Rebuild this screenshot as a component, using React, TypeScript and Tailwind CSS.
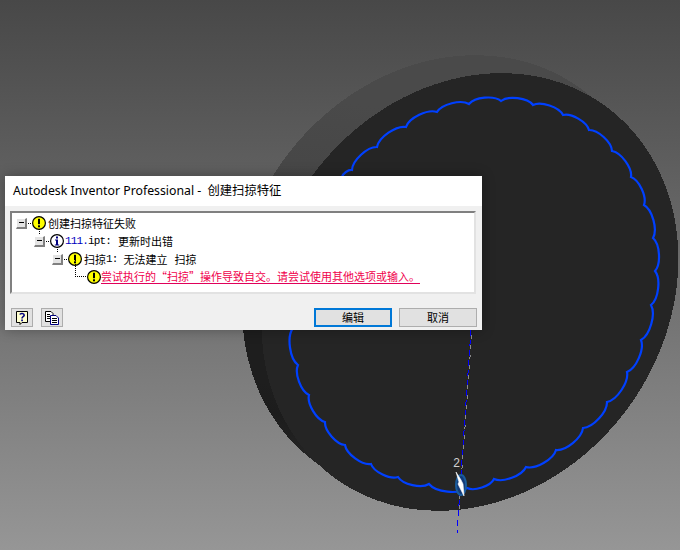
import type { ReactNode } from 'react'

type Pt = [number, number]

const cusps: Pt[] = [
  [342, 177], [352, 170], [377, 147], [406, 127], [437, 112], [469, 104], [501, 101], [533, 105],
  [563, 115], [589, 130], [612, 151], [631, 177], [644, 205], [653, 238], [655, 271], [651, 305],
  [641, 340], [627, 372], [607, 402], [583, 428], [556, 450], [526, 467], [494, 479], [467, 488],
  [429, 484], [398, 477], [371, 464], [345, 445], [325, 422], [309, 395], [298, 365], [293, 328],
]

function scallop(pts: Pt[]) {
  let d = `M${pts[0][0]} ${pts[0][1]}`
  for (let i = 1; i < pts.length; i++) {
    const [ax, ay] = pts[i - 1]
    const [bx, by] = pts[i]
    const dx = bx - ax
    const dy = by - ay
    const len = Math.hypot(dx, dy)
    const nx = dy / len
    const ny = -dx / len
    const h = len * 0.2
    d += ` C${ax + dx * 0.2 + nx * h} ${ay + dy * 0.2 + ny * h} ${bx - dx * 0.2 + nx * h} ${by - dy * 0.2 + ny * h} ${bx} ${by}`
  }
  return d
}

function Model() {
  return (
    <svg className="absolute inset-0" width={680} height={550} viewBox="0 0 680 550">
      <defs>
        <linearGradient id="rimTop" gradientUnits="userSpaceOnUse" x1="280" y1="180" x2="500" y2="50">
          <stop offset="0" stopColor="#3e3e3e" />
          <stop offset="1" stopColor="#4a4a4a" />
        </linearGradient>
        <linearGradient id="rimLow" gradientUnits="userSpaceOnUse" x1="240" y1="340" x2="300" y2="320">
          <stop offset="0" stopColor="#262626" />
          <stop offset="0.6" stopColor="#1c1c1c" />
          <stop offset="1" stopColor="#1e1e1e" />
        </linearGradient>
        <clipPath id="lowPart">
          <rect x={0} y={300} width={680} height={250} />
        </clipPath>
        <clipPath id="topPart">
          <rect x={0} y={0} width={680} height={300} />
        </clipPath>
      </defs>
      <g clipPath="url(#topPart)">
        <ellipse cx={444} cy={276} rx={232} ry={198} transform="rotate(-54 444 276)" fill="url(#rimTop)" shapeRendering="crispEdges" />
      </g>
      <g clipPath="url(#lowPart)">
        <ellipse cx={449} cy={280} rx={226} ry={196} transform="rotate(-54 449 280)" fill="url(#rimLow)" shapeRendering="crispEdges" />
      </g>
      <ellipse cx={470} cy={292} rx={230} ry={196} transform="rotate(-54 470 292)" fill="#252525" shapeRendering="crispEdges" />
      <path d={scallop(cusps)} fill="none" stroke="#0040ff" strokeWidth={2.2} />
      <path d="M471 330 L457 533" stroke="#0000ff" strokeWidth={1} strokeDasharray="6 4" shapeRendering="crispEdges" />
      <path d="M472 330 L459 510" stroke="#8a8a8a" strokeWidth={1} strokeDasharray="4 6" strokeDashoffset={5} shapeRendering="crispEdges" />
      <ellipse cx={461} cy={485} rx={5} ry={10} fill="#123a78" stroke="#1a5c9c" strokeWidth={2} />
      <path d="M456 472 L459 482 L458 484 L464 496 L463 484 L461 480 Z" fill="#ffffff" stroke="#ffffff" strokeWidth={0.6} />
      <text x={453} y={467} fontSize={12} fill="#d0d0d0" fontFamily="'Liberation Mono', monospace">2</text>
    </svg>
  )
}

function Warn() {
  return (
    <svg width={14} height={14} viewBox="0 0 14 14" className="shrink-0">
      <circle cx={7} cy={7} r={6.4} fill="#ffff00" stroke="#000000" strokeWidth={1.2} />
      <rect x={6} y={2.8} width={2} height={5.4} fill="#000000" />
      <rect x={6} y={9.3} width={2} height={2} fill="#000000" />
    </svg>
  )
}

function Info() {
  return (
    <svg width={14} height={14} viewBox="0 0 14 14" className="shrink-0">
      <circle cx={7} cy={7} r={6.4} fill="#ffffff" stroke="#000000" strokeWidth={1.2} />
      <rect x={6} y={2.5} width={2} height={2} fill="#000080" />
      <path d="M5 5.5H8V10.5H9.2V11.5H4.8V10.5H6V6.5H5Z" fill="#000080" />
    </svg>
  )
}

function Minus() {
  return (
    <span className="flex h-[11px] w-[11px] shrink-0 items-center justify-center border-t border-l border-t-white border-l-white border-r-2 border-b-2 border-r-[#808080] border-b-[#808080] bg-[#e4e4e4]">
      <span className="h-px w-[5px] bg-black" />
    </span>
  )
}

function Row({ indent, minus = true, icon, children }: { indent: string; minus?: boolean; icon: ReactNode; children: ReactNode }) {
  return (
    <div className={`relative flex h-[18px] items-center ${indent}`}>
      {minus ? <Minus /> : <span className="w-[11px] shrink-0" />}
      {minus && <span className="mx-px w-[3px] shrink-0 border-t border-dotted border-black" />}
      {icon}
      {children}
    </div>
  )
}

const mono = "font-['Liberation_Mono',monospace] text-[11px] tracking-[-0.85px]"

export default function App() {
  return (
    <div className="relative h-[550px] w-[680px] overflow-hidden bg-gradient-to-b from-[#484848] to-[#969696] font-['Noto_Sans_CJK_SC',sans-serif]">
      <Model />

      <div className="absolute left-[5px] top-[176px] flex h-[154px] w-[477px] flex-col bg-[#f0f0f0] shadow-[0_0_12px_rgba(0,0,0,0.3)]">
        <div className="flex h-[30px] items-center bg-white pl-2 font-['Noto_Sans','Noto_Sans_CJK_SC',sans-serif] text-[12.3px] text-black">
          <span className="whitespace-pre">Autodesk Inventor Professional - </span>
          <span className="ml-[3px]">创建扫掠特征</span>
        </div>

        <div className="ml-[5px] mr-[6px] mt-[5px] h-[83px] border-2 border-t-[#808080] border-l-[#808080] border-r-[#e2e2e2] border-b-[#e2e2e2] bg-white pt-[1px] text-[11px] leading-none text-black">
          <Row indent="pl-1" icon={<Warn />}>
            <span className="ml-0.5">创建扫掠特征失败</span>
          </Row>
          <Row indent="pl-[22px]" icon={<Info />}>
            <span className="absolute left-[27px] top-[-3px] h-[5px] border-l border-dotted border-black" />
            <span className="ml-px flex items-center">
              <span className={`${mono} text-[#0000c0]`}>111.</span>
              <span className={mono}>ipt:</span>
              <span className="ml-[7px]">更新时出错</span>
            </span>
          </Row>
          <Row indent="pl-10" icon={<Warn />}>
            <span className="absolute left-[45px] top-[-3px] h-[5px] border-l border-dotted border-black" />
            <span className="ml-0.5 flex items-center">
              扫掠<span className={mono}>1:</span>
              <span className="ml-[6px]">无法建立</span>
              <span className="ml-[7px]">扫掠</span>
            </span>
          </Row>
          <Row indent="pl-[64px]" minus={false} icon={<Warn />}>
            <span className="border-b border-[#e0005a] leading-[13px] text-[#f0004c]">
              尝试执行的“扫掠”操作导致自交。请尝试使用其他选项或输入。
            </span>
            <span className="absolute left-[63px] top-[-8px] h-[17px] w-[11px] border-b border-l border-dotted border-black" />
          </Row>
        </div>

        <div className="flex items-start justify-between pl-[6px] pr-[5px] pt-[14px] text-[11px] text-black">
          <div className="flex gap-2">
            <button className="flex h-[19px] w-[22px] items-center justify-center border border-[#adadad] bg-[#e1e1e1]">
              <svg width={16} height={16} viewBox="0 0 16 16">
                <path d="M2.5 1.5H13.5V12.5H8L6 14.5V12.5H2.5Z" fill="#ffffd0" stroke="#000000" />
                <path d="M5.8 4.5C6.5 3 10 3 10.2 5C10.3 6.8 8 6.6 8 8.5" fill="none" stroke="#000080" strokeWidth={1.6} />
                <rect x={7.2} y={9.5} width={1.7} height={1.7} fill="#000080" />
              </svg>
            </button>
            <button className="flex h-[19px] w-[22px] items-center justify-center border border-[#adadad] bg-[#e1e1e1]">
              <svg width={16} height={16} viewBox="0 0 16 16">
                <path d="M1.5 1.5H7L9 3.5V11.5H1.5Z" fill="#ffffff" stroke="#000000" />
                <path d="M6.5 5.5H12L14.5 8V14.5H6.5Z" fill="#ffffff" stroke="#000080" />
                <path d="M3 4.5H6M3 6.5H6M3 8.5H6M8 8.5H13M8 10.5H13M8 12.5H13" stroke="#000000" />
              </svg>
            </button>
          </div>
          <div className="flex gap-[7px]">
            <button className="h-[19px] w-[78px] border-2 border-[#0078d7] bg-[#e1e1e1] leading-none">编辑</button>
            <button className="h-[19px] w-[78px] border border-[#adadad] bg-[#e1e1e1] leading-none">取消</button>
          </div>
        </div>
      </div>
    </div>
  )
}
